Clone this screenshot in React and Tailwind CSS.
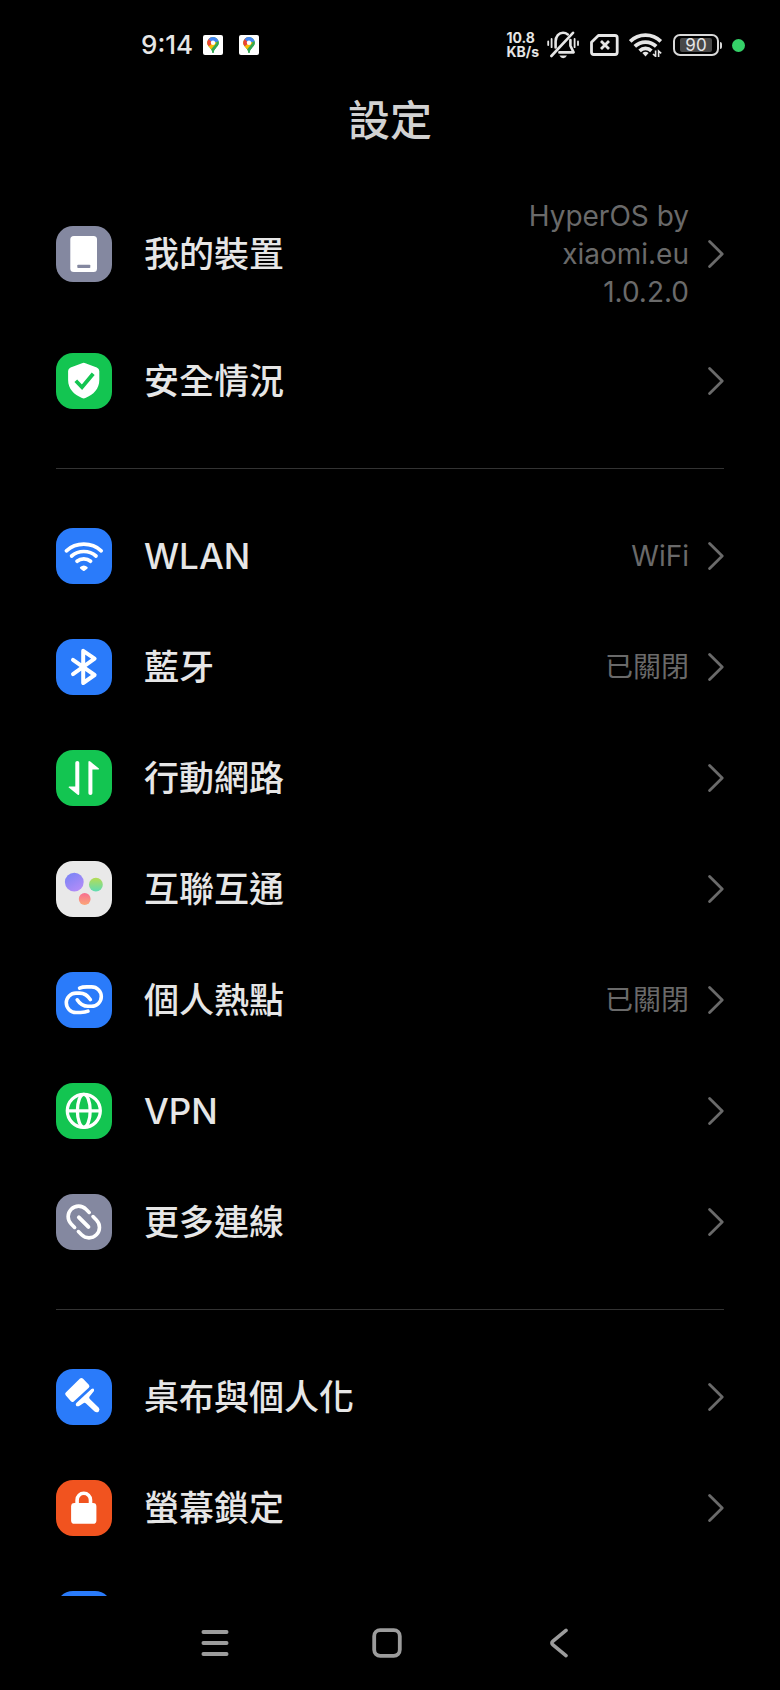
import React from 'react';

const BLUE = 'bg-[#2a7bfa]';
const GREEN = 'bg-[#13c551]';
const GREY = 'bg-[#8488a0]';

/* ---------- row icons, all drawn on a 56x56 grid ---------- */

const DeviceIcon = () => (
  <>
    <rect x="14.3" y="10" width="26.7" height="36" rx="3.5" fill="#fff" />
    <rect x="21.3" y="38.7" width="13" height="3.4" rx="0.8" fill="#8488a0" />
  </>
);

const ShieldIcon = () => (
  <>
    <path d="M26 10.2Q27.7 9.3 29.4 10.2L40.8 14.4Q43.3 15.4 43.3 18V27C43.3 36 37.5 41.5 29.4 45Q27.7 45.8 26 45C18 41.5 12.1 36 12.1 27V18Q12.1 15.4 14.6 14.4Z" fill="#fff" />
    <path d="M19.8 27.8L26 34.2L37.2 20.8" fill="none" stroke="#13c551" strokeWidth="3.8" />
  </>
);

const WlanIcon = () => (
  <>
    <g fill="none" stroke="#fff" strokeWidth="3.7" strokeLinecap="round">
      <path d="M10.4 22.8C20 14 35.6 14 45.2 22.8" />
      <path d="M15.6 28C22.4 22 33.2 22 40 28" />
      <path d="M21 33.2C24.8 30.2 30.8 30.2 34.6 33.2" />
    </g>
    <path d="M24.2 39Q27.8 35.8 31.4 39Q32.2 39.8 31.2 40.8L28.6 42.8Q27.8 43.4 27 42.8L24.4 40.8Q23.4 39.8 24.2 39Z" fill="#fff" />
  </>
);

const BluetoothIcon = () => (
  <path d="M17 20.8L38.6 36L27.2 44V11.8L38.6 19.6L17 35.2" fill="none" stroke="#fff" strokeWidth="4" strokeLinecap="round" strokeLinejoin="round" />
);

const MobileDataIcon = () => (
  <g fill="#fff">
    <path d="M19.3 12.8Q19.3 11 21.3 11Q23.3 11 23.3 12.8V43.6Q23.3 46 21.4 44.4L12.8 37.6Q12 36.4 13.4 36.4H19.3Z" />
    <path d="M36.4 43.2Q36.4 45 34.4 45Q32.4 45 32.4 43.2V12.4Q32.4 10 34.3 11.6L42.9 18.4Q43.7 19.6 42.3 19.6H36.4Z" />
  </g>
);

const InterconnectIcon = () => (
  <>
    <defs>
      <linearGradient id="violet" x1="0" y1="0" x2="0.6" y2="1">
        <stop offset="0" stopColor="#7583f5" />
        <stop offset="1" stopColor="#b18cf8" />
      </linearGradient>
      <linearGradient id="lime" x1="0" y1="0" x2="0" y2="1">
        <stop offset="0" stopColor="#b5dc55" />
        <stop offset="1" stopColor="#5fdcb4" />
      </linearGradient>
      <linearGradient id="coral" x1="0" y1="0" x2="0" y2="1">
        <stop offset="0" stopColor="#f76f8f" />
        <stop offset="1" stopColor="#fba678" />
      </linearGradient>
    </defs>
    <circle cx="18.3" cy="21.1" r="9.4" fill="url(#violet)" />
    <circle cx="39.9" cy="23.7" r="6.9" fill="url(#lime)" />
    <circle cx="28.7" cy="38" r="5.9" fill="url(#coral)" />
  </>
);

const HotspotIcon = () => (
  <g fill="none" stroke="#fff" strokeWidth="3.6" strokeLinecap="round">
    <path d="M23.6 16.2C26 15 28.5 14.9 31 14.9H35.6A9.7 9.7 0 0 1 35.6 34.3H32C27 34.3 23.6 31.6 21.2 27.8" />
    <path d="M32 39.2C29.6 40.4 27.1 40.5 24.6 40.5H20A9.7 9.7 0 0 1 20 21.1H23.6C28.6 21.1 32 23.8 34.4 27.6" />
  </g>
);

const GlobeIcon = () => (
  <g fill="none" stroke="#fff" strokeWidth="3.3">
    <circle cx="27.8" cy="27.8" r="16.5" />
    <ellipse cx="27.8" cy="27.8" rx="6.4" ry="16.5" />
    <path d="M11 27.8H44.6" />
  </g>
);

const MoreLinksIcon = () => (
  <g fill="none" stroke="#fff" strokeWidth="3.6" strokeLinecap="round">
    <path d="M33.2 18.4L30 15.2A10.4 10.4 0 0 0 15.2 30L18.6 33.4" />
    <path d="M22.4 37.6L25.6 40.8A10.4 10.4 0 0 0 40.4 26L37 22.6" />
    <path d="M22.9 23.4L32.4 32.8" strokeWidth="4" />
  </g>
);

const BrushIcon = () => (
  <g fill="#fff">
    <path d="M25.4 11L31.4 17.2L16.4 31L11.2 25Z" stroke="#fff" strokeWidth="4" strokeLinejoin="round" />
    <path d="M35.4 20Q38.6 18.6 38 22L33.6 27.4Q32.6 28.8 33.8 30L42.8 38.8Q44.2 40.6 42.8 42.4Q40.8 44.2 38.6 42.6L30 34.4Q28.6 33.2 27 34.4L23.6 36.8Q21 38 20 36.4Q19.2 35 20.6 33.8Z" />
  </g>
);

const LockIcon = () => (
  <>
    <rect x="15.1" y="23" width="25.3" height="20.8" rx="3.4" fill="#fff" />
    <path d="M21.1 25V20A6.7 6.7 0 0 1 34.5 20V25" fill="none" stroke="#fff" strokeWidth="3.6" />
  </>
);

/* ---------- data ---------- */

const groups = [
  [
    { label: '我的裝置', value: 'HyperOS by xiaomi.eu 1.0.2.0', bg: GREY, Icon: DeviceIcon },
    { label: '安全情況', bg: GREEN, Icon: ShieldIcon },
  ],
  [
    { label: 'WLAN', value: 'WiFi', bg: BLUE, Icon: WlanIcon },
    { label: '藍牙', value: '已關閉', bg: BLUE, Icon: BluetoothIcon },
    { label: '行動網路', bg: GREEN, Icon: MobileDataIcon },
    { label: '互聯互通', bg: 'bg-[#e9e9e9]', Icon: InterconnectIcon },
    { label: '個人熱點', value: '已關閉', bg: BLUE, Icon: HotspotIcon },
    { label: 'VPN', bg: GREEN, Icon: GlobeIcon },
    { label: '更多連線', bg: GREY, Icon: MoreLinksIcon },
  ],
  [
    { label: '桌布與個人化', bg: BLUE, Icon: BrushIcon },
    { label: '螢幕鎖定', bg: 'bg-[#f1531f]', Icon: LockIcon },
    { label: '', bg: BLUE },
  ],
];

/* ---------- status bar ---------- */

function MapsPin() {
  return (
    <span className="flex size-5 items-center justify-center rounded-xs bg-white">
      <svg viewBox="0 0 12 16" className="h-4 w-3">
        <defs>
          <clipPath id="pin">
            <path d="M6 0A5.8 5.8 0 0 1 11.8 5.8C11.8 9.6 7.4 11 6.6 15.4Q6 16.6 5.4 15.4C4.6 11 0.2 9.6 0.2 5.8A5.8 5.8 0 0 1 6 0Z" />
          </clipPath>
        </defs>
        <g clipPath="url(#pin)">
          <rect width="12" height="16" fill="#34a853" />
          <path d="M0 4L6 6L0 13Z" fill="#fbbc04" />
          <path d="M0 11.5L8 2.5L10 7L3.4 14Z" fill="#fbbc04" />
          <path d="M12 3L12 16H5L4 12.5Z" fill="#34a853" />
          <path d="M0 0H4L6 6L1.4 9.5L0 7Z" fill="#ea4335" />
          <path d="M2.2 0H12V4L6 6L1.8 2.2Z" fill="#4285f4" />
        </g>
        <circle cx="6" cy="5.8" r="2.2" fill="#fff" />
      </svg>
    </span>
  );
}

function StatusBar() {
  return (
    <header className="flex h-[90px] shrink-0 items-center justify-between pr-[35px] pl-[141px] text-[#e6e6e6]">
      <div className="flex items-center">
        <time className="mr-[10px] text-[26px] leading-8 font-medium">9:14</time>
        <div className="flex gap-4">
          <MapsPin />
          <MapsPin />
        </div>
      </div>

      <div className="flex items-center">
        <div className="mr-2 text-[14px] leading-[14px] font-bold">
          <p>10.8</p>
          <p>KB/s</p>
        </div>

        <svg viewBox="0 0 32 28" className="mr-[11px] h-7 w-8" fill="none" stroke="currentColor" strokeWidth="2.6" strokeLinecap="round">
          <path d="M1.2 10.4V14M4.6 8V16.2M27.6 8V16.2M31 10.4V14" strokeWidth="1.8" />
          <path d="M8.6 16.4V10.6C8.6 5 12 1.8 16 1.8Q18.8 1.8 20.8 3.4" />
          <path d="M4.4 25L26 1.8" />
          <path d="M23.4 9V14.8L26.6 21.4H12.4" strokeLinejoin="round" />
          <path d="M12.4 24.6H20Q18.6 27.2 16.2 27.2Q13.8 27.2 12.4 24.6Z" fill="currentColor" stroke="none" />
        </svg>

        <svg viewBox="0 0 29 22" className="mr-[10px] h-[22px] w-[29px]" fill="none" stroke="currentColor" strokeWidth="2.8" strokeLinejoin="round">
          <path d="M8.4 1.5H25Q27.2 1.5 27.2 3.7V18.3Q27.2 20.5 25 20.5H3.7Q1.5 20.5 1.5 18.3V8.2Z" />
          <path d="M11 7L19 15M19 7L11 15" strokeWidth="2.8" />
        </svg>

        <svg viewBox="0 0 34 24" className="mr-[10px] h-6 w-[34px]" fill="none" stroke="currentColor" strokeWidth="3.7">
          <path d="M1.2 8.4C9.6 0 23.4 0 31.8 8.4" />
          <path d="M5.8 13.4C11.8 7.6 21.2 7.6 27.2 13.4" />
          <path d="M10.6 17.8C14 14.6 19 14.6 22.4 17.8" />
          <path d="M13.4 20Q16.5 17.4 19.6 20L16.5 23.4Z" fill="currentColor" stroke="none" />
          <path d="M26.6 17.6V23.4L24 21M29.6 24V18L32.2 20.4" strokeWidth="1.6" />
        </svg>

        <div className="flex items-center gap-px">
          <div className="flex h-[22px] w-[46px] items-center justify-center rounded-[7px] border-2 border-[#d8d8d8]">
            <span className="flex h-[14px] w-8 items-center justify-center rounded-xs bg-[#484848] text-[17px] leading-none">90</span>
          </div>
          <span className="h-[7px] w-[2px] rounded-r-sm bg-[#d8d8d8]" />
        </div>
        <span className="ml-[10px] size-[13px] rounded-full bg-[#35d168]" />
      </div>
    </header>
  );
}

/* ---------- list ---------- */

function SettingRow({ label, value, bg, Icon }) {
  return (
    <li>
      <button type="button" aria-label={label || '顯示'} className="flex min-h-[111px] w-full items-center py-[14px] text-left">
        <span className={`size-14 shrink-0 overflow-hidden rounded-[17px] ${bg}`}>
          {Icon && (
            <svg viewBox="0 0 56 56" className="size-14">
              <Icon />
            </svg>
          )}
        </span>
        <span className="ml-8 flex-1 text-[35px] leading-[48px] font-medium text-[#e6e6e6]">{label}</span>
        {value && (
          <span className="max-w-[176px] text-right text-[28px] leading-[38px] text-[#6a6a6a]">{value}</span>
        )}
        <svg viewBox="0 0 16 28" className="ml-[19px] h-7 w-4 shrink-0" fill="none" stroke="#6a6a6a" strokeWidth="2.8" strokeLinecap="round" strokeLinejoin="round">
          <path d="M1.6 1.6L14.2 14L1.6 26.4" />
        </svg>
      </button>
    </li>
  );
}

function NavBar() {
  return (
    <nav className="flex h-[94px] shrink-0 items-center justify-center gap-[116px] pr-[6px] text-[#9c9c9c]">
      <button type="button" aria-label="最近使用" className="flex size-14 items-center justify-center">
        <svg viewBox="0 0 28 28" className="size-7" stroke="currentColor" strokeWidth="3.8" strokeLinecap="round">
          <path d="M2.4 3H25.6M2.4 14H25.6M2.4 25H25.6" />
        </svg>
      </button>
      <button type="button" aria-label="首頁" className="flex size-14 items-center justify-center">
        <svg viewBox="0 0 30 30" className="size-[30px]" fill="none" stroke="currentColor" strokeWidth="3.8">
          <rect x="2.2" y="2.2" width="25.6" height="25.6" rx="6" />
        </svg>
      </button>
      <button type="button" aria-label="返回" className="flex size-14 items-center justify-center">
        <svg viewBox="0 0 20 30" className="h-[30px] w-5" fill="none" stroke="currentColor" strokeWidth="3.6" strokeLinecap="round">
          <path d="M17 2.4L4 13Q1.8 15 4 17L17 27.6" />
        </svg>
      </button>
    </nav>
  );
}

export default function App() {
  return (
    <div className="flex h-screen flex-col bg-black font-['Inter','Noto_Sans_CJK_TC',sans-serif]">
      <StatusBar />

      <main className="min-h-0 flex-1 overflow-y-auto px-14 [scrollbar-width:none]">
        <h1 className="mb-[31px] text-center text-[42px] leading-[62px] font-medium text-[#d2d2d2]">設定</h1>
        {groups.map((rows, i) => (
          <React.Fragment key={i}>
            {i > 0 && <hr className="mt-8 mb-[31px] border-[#333333]" />}
            <ul>
              {rows.map((row, j) => (
                <SettingRow key={j} {...row} />
              ))}
            </ul>
          </React.Fragment>
        ))}
      </main>

      <NavBar />
    </div>
  );
}
